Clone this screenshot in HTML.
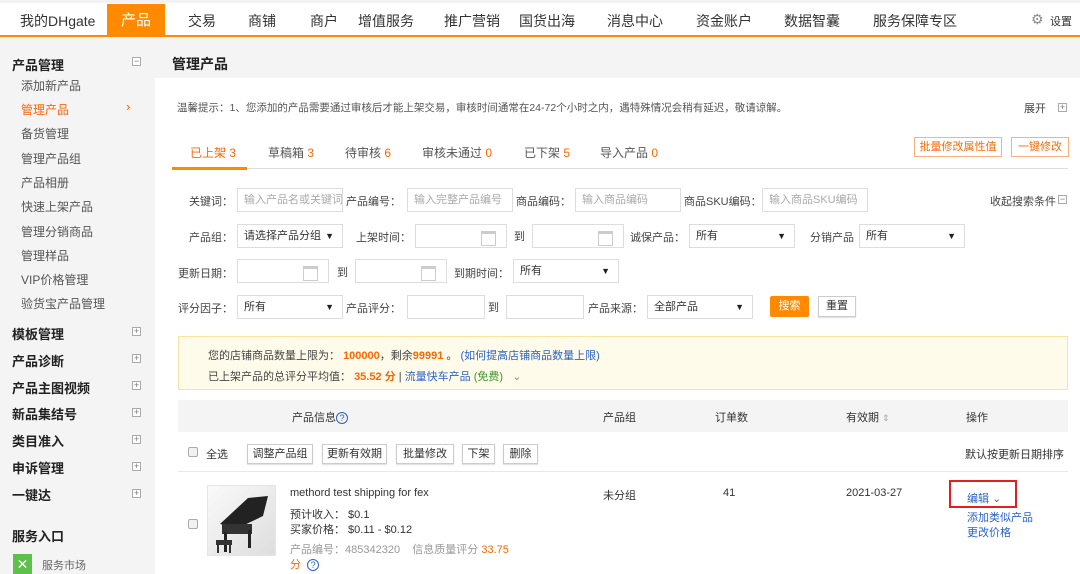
<!DOCTYPE html>
<html><head><meta charset="utf-8">
<style>
*{margin:0;padding:0;box-sizing:border-box}
body{width:1080px;height:574px;overflow:hidden;background:#f4f4f4;font-family:"Liberation Sans","Noto Sans CJK SC",sans-serif;color:#333;position:relative;font-size:12px}
.a{position:absolute;white-space:nowrap}
#nav{position:absolute;left:0;top:0;width:1080px;height:37px;background:#fff;border-bottom:2px solid #ff8a00;border-top:3px solid #f2f2f2}
#nav .i{position:absolute;top:8px;font-size:14px;color:#333}
#nav .on{position:absolute;left:107px;top:1px;width:58px;height:33px;background:#ff8a00;color:#fff;font-size:15px;text-align:center;line-height:33px}
.sb{font-size:12px;color:#555;left:21px}
.sh{font-size:13px;font-weight:bold;color:#222;left:12px}
.bx{position:absolute;width:9px;height:9px;border:1px solid #aaa;background:#fff;font-size:9px;line-height:7px;text-align:center;color:#777}
#panel{position:absolute;left:155px;top:78px;width:925px;height:496px;background:#fff}
.lb{font-size:11px;color:#444}
.in{position:absolute;height:24px;border:1px solid #ddd;background:#fff;font-size:11px;color:#aaa;padding-left:6px;line-height:22px;overflow:hidden;white-space:nowrap}
.sel{color:#333}
.sel:after{content:"▼";position:absolute;right:8px;top:0;font-size:9px;color:#222}
.cal:after{content:"";position:absolute;right:10px;top:6px;width:13px;height:11px;border:1px solid #ccc;border-top:3px solid #ccc}
.btn{position:absolute;height:20px;border:1px solid #ccc;background:#fff;font-size:11px;color:#333;text-align:center;line-height:18px;box-shadow:0 1px 1px #ddd}
.ob{position:absolute;height:20px;border:1px solid #fbb27a;color:#ff6b00;font-size:11px;text-align:center;line-height:18px;background:#fff}
.blue{color:#2a63c6}
.org{color:#ff6600}
.cb{position:absolute;width:10px;height:10px;border:1px solid #aaa;border-radius:2px;background:#f2f2f2}
</style></head><body>
<div id="nav">
<span class="i" style="left:20px">我的DHgate</span>
<div class="on">产品</div>
<span class="i" style="left:188px">交易</span>
<span class="i" style="left:248px">商铺</span>
<span class="i" style="left:310px">商户</span>
<span class="i" style="left:358px">增值服务</span>
<span class="i" style="left:444px">推广营销</span>
<span class="i" style="left:519px">国货出海</span>
<span class="i" style="left:607px">消息中心</span>
<span class="i" style="left:696px">资金账户</span>
<span class="i" style="left:784px">数据智囊</span>
<span class="i" style="left:873px">服务保障专区</span>
<span class="i" style="left:1031px;color:#888">⚙</span>
<span class="i" style="left:1050px;font-size:11px;top:10px">设置</span>
</div>

<span class="a sh" style="top:55px">产品管理</span><div class="bx" style="left:132px;top:57px">−</div>
<span class="a sb" style="top:77px">添加新产品</span>
<span class="a sb" style="top:101px;color:#ff6600">管理产品</span><span class="a" style="left:126px;top:99px;color:#ff6600;font-size:13px">›</span>
<span class="a sb" style="top:125px">备货管理</span>
<span class="a sb" style="top:150px">管理产品组</span>
<span class="a sb" style="top:174px">产品相册</span>
<span class="a sb" style="top:198px">快速上架产品</span>
<span class="a sb" style="top:223px">管理分销商品</span>
<span class="a sb" style="top:247px">管理样品</span>
<span class="a sb" style="top:271px">VIP价格管理</span>
<span class="a sb" style="top:295px">验货宝产品管理</span>
<span class="a sh" style="top:324px">模板管理</span><div class="bx" style="left:132px;top:327px">+</div>
<span class="a sh" style="top:351px">产品诊断</span><div class="bx" style="left:132px;top:354px">+</div>
<span class="a sh" style="top:378px">产品主图视频</span><div class="bx" style="left:132px;top:381px">+</div>
<span class="a sh" style="top:404px">新品集结号</span><div class="bx" style="left:132px;top:408px">+</div>
<span class="a sh" style="top:431px">类目准入</span><div class="bx" style="left:132px;top:435px">+</div>
<span class="a sh" style="top:458px">申诉管理</span><div class="bx" style="left:132px;top:462px">+</div>
<span class="a sh" style="top:485px">一键达</span><div class="bx" style="left:132px;top:489px">+</div>
<span class="a sh" style="top:526px">服务入口</span>
<div class="a" style="left:13px;top:554px;width:19px;height:20px;background:#5cc04a;color:#fff;font-size:14px;text-align:center;line-height:20px">✕</div>
<span class="a" style="left:42px;top:557px;font-size:11px;color:#666">服务市场</span>

<span class="a" style="left:172px;top:54px;font-size:14px;font-weight:bold;color:#222">管理产品</span>
<div id="panel"></div>
<span class="a" style="left:177px;top:100px;font-size:10.5px;color:#555">温馨提示：1、您添加的产品需要通过审核后才能上架交易，审核时间通常在24-72个小时之内，遇特殊情况会稍有延迟，敬请谅解。</span>
<span class="a" style="left:1024px;top:100px;font-size:11px;color:#444">展开</span><div class="bx" style="left:1058px;top:103px">+</div>

<div class="a" style="left:172px;top:168px;width:896px;height:1px;background:#ddd"></div>
<div class="a" style="left:172px;top:167px;width:75px;height:3px;background:#ff8a00"></div>
<span class="a" style="left:190px;top:144px;font-size:12px;color:#ff6600">已上架 3</span>
<span class="a" style="left:268px;top:144px;font-size:12px;color:#555">草稿箱 <span class="org">3</span></span>
<span class="a" style="left:345px;top:144px;font-size:12px;color:#555">待审核 <span class="org">6</span></span>
<span class="a" style="left:422px;top:144px;font-size:12px;color:#555">审核未通过 <span class="org">0</span></span>
<span class="a" style="left:524px;top:144px;font-size:12px;color:#555">已下架 <span class="org">5</span></span>
<span class="a" style="left:600px;top:144px;font-size:12px;color:#555">导入产品 <span class="org">0</span></span>
<div class="ob" style="left:914px;top:137px;width:88px">批量修改属性值</div>
<div class="ob" style="left:1011px;top:137px;width:58px">一键修改</div>

<span class="a lb" style="left:189px;top:193px">关键词：</span><div class="in" style="left:237px;top:188px;width:106px">输入产品名或关键词</div>
<span class="a lb" style="left:346px;top:193px">产品编号：</span><div class="in" style="left:407px;top:188px;width:106px">输入完整产品编号</div>
<span class="a lb" style="left:516px;top:193px">商品编码：</span><div class="in" style="left:575px;top:188px;width:106px">输入商品编码</div>
<span class="a lb" style="left:684px;top:193px">商品SKU编码：</span><div class="in" style="left:762px;top:188px;width:106px">输入商品SKU编码</div>
<span class="a lb" style="left:990px;top:193px">收起搜索条件</span><div class="bx" style="left:1058px;top:195px">−</div>

<span class="a lb" style="left:189px;top:229px">产品组：</span><div class="in sel" style="left:237px;top:224px;width:106px">请选择产品分组</div>
<span class="a lb" style="left:356px;top:229px">上架时间：</span><div class="in cal" style="left:415px;top:224px;width:92px"></div>
<span class="a lb" style="left:514px;top:228px">到</span><div class="in cal" style="left:532px;top:224px;width:92px"></div>
<span class="a lb" style="left:630px;top:229px">诚保产品：</span><div class="in sel" style="left:689px;top:224px;width:106px">所有</div>
<span class="a lb" style="left:810px;top:229px">分销产品</span><div class="in sel" style="left:859px;top:224px;width:106px">所有</div>

<span class="a lb" style="left:178px;top:265px">更新日期：</span><div class="in cal" style="left:237px;top:259px;width:92px"></div>
<span class="a lb" style="left:337px;top:264px">到</span><div class="in cal" style="left:355px;top:259px;width:92px"></div>
<span class="a lb" style="left:454px;top:265px">到期时间：</span><div class="in sel" style="left:513px;top:259px;width:106px">所有</div>

<span class="a lb" style="left:178px;top:300px">评分因子：</span><div class="in sel" style="left:237px;top:295px;width:106px">所有</div>
<span class="a lb" style="left:346px;top:300px">产品评分：</span><div class="in" style="left:407px;top:295px;width:78px"></div>
<span class="a lb" style="left:488px;top:299px">到</span><div class="in" style="left:506px;top:295px;width:78px"></div>
<span class="a lb" style="left:588px;top:300px">产品来源：</span><div class="in sel" style="left:647px;top:295px;width:106px">全部产品</div>
<div class="a" style="left:770px;top:296px;width:39px;height:21px;background:#ff8a00;color:#fff;font-size:11px;text-align:center;line-height:21px;border-radius:2px">搜索</div>
<div class="btn" style="left:818px;top:296px;width:38px;height:21px">重置</div>

<div class="a" style="left:178px;top:336px;width:890px;height:54px;background:#fffbea;border:1px solid #fbe3a3"></div>
<span class="a" style="left:208px;top:347px;font-size:11px;color:#444">您的店铺商品数量上限为： <b class="org">100000</b>，剩余<b class="org">99991</b> 。 <span class="blue">(如何提高店铺商品数量上限)</span></span>
<span class="a" style="left:208px;top:368px;font-size:11px;color:#444">已上架产品的总评分平均值： <b class="org">35.52 分</b> | <span class="blue">流量快车产品</span> <span style="color:#3a9a2a">(免费)</span> &nbsp; <span style="color:#888">⌄</span></span>

<div class="a" style="left:178px;top:400px;width:890px;height:32px;background:#f4f4f4"></div>
<span class="a" style="left:292px;top:409px;font-size:11px">产品信息<span class="blue" style="display:inline-block;width:12px;height:12px;border:1px solid #2a63c6;border-radius:50%;font-size:9px;line-height:10px;text-align:center">?</span></span>
<span class="a" style="left:603px;top:409px;font-size:11px">产品组</span>
<span class="a" style="left:715px;top:409px;font-size:11px">订单数</span>
<span class="a" style="left:846px;top:409px;font-size:11px">有效期 <span style="color:#aaa;font-size:9px">⇕</span></span>
<span class="a" style="left:966px;top:409px;font-size:11px">操作</span>

<div class="cb" style="left:188px;top:447px"></div>
<span class="a" style="left:206px;top:446px;font-size:11px">全选</span>
<div class="btn" style="left:247px;top:444px;width:66px">调整产品组</div>
<div class="btn" style="left:322px;top:444px;width:65px">更新有效期</div>
<div class="btn" style="left:396px;top:444px;width:58px">批量修改</div>
<div class="btn" style="left:462px;top:444px;width:33px">下架</div>
<div class="btn" style="left:503px;top:444px;width:35px">删除</div>
<span class="a" style="left:965px;top:446px;font-size:11px">默认按更新日期排序</span>
<div class="a" style="left:178px;top:471px;width:890px;height:1px;background:#e8e8e8"></div>

<div class="cb" style="left:188px;top:519px"></div>
<div class="a" style="left:207px;top:485px;width:69px;height:71px;background:linear-gradient(135deg,#fafafa,#ddd);border:1px solid #e5e5e5;overflow:hidden">
<svg width="69" height="71"><polygon points="12,38 40,12 60,10 55,30 30,42" fill="#222"/><rect x="14" y="38" width="30" height="10" fill="#333"/><rect x="16" y="46" width="3" height="20" fill="#222"/><rect x="40" y="44" width="3" height="18" fill="#222"/><rect x="8" y="54" width="16" height="5" fill="#333"/><rect x="9" y="58" width="2" height="9" fill="#333"/><rect x="21" y="58" width="2" height="9" fill="#333"/></svg></div>
<span class="a" style="left:290px;top:487px;font-size:11px">methord test shipping for fex</span>
<span class="a" style="left:290px;top:506px;font-size:11px">预计收入： $0.1</span>
<span class="a" style="left:290px;top:521px;font-size:11px">买家价格： $0.11 - $0.12</span>
<span class="a" style="left:290px;top:541px;font-size:11px;color:#999">产品编号：485342320 &nbsp;&nbsp; 信息质量评分 <span class="org">33.75</span></span>
<span class="a org" style="left:290px;top:556px;font-size:11px">分 &nbsp;<span class="blue" style="display:inline-block;width:12px;height:12px;border:1px solid #2a63c6;border-radius:50%;font-size:9px;line-height:10px;text-align:center">?</span></span>
<span class="a" style="left:603px;top:487px;font-size:11px">未分组</span>
<span class="a" style="left:723px;top:487px;font-size:11px">41</span>
<span class="a" style="left:846px;top:487px;font-size:11px">2021-03-27</span>
<div class="a" style="left:949px;top:480px;width:68px;height:28px;border:2px solid #e02020"></div>
<span class="a blue" style="left:967px;top:490px;font-size:11px">编辑 <span style="color:#666">⌄</span></span>
<span class="a blue" style="left:967px;top:509px;font-size:11px">添加类似产品</span>
<span class="a blue" style="left:967px;top:524px;font-size:11px">更改价格</span>
</body></html>
